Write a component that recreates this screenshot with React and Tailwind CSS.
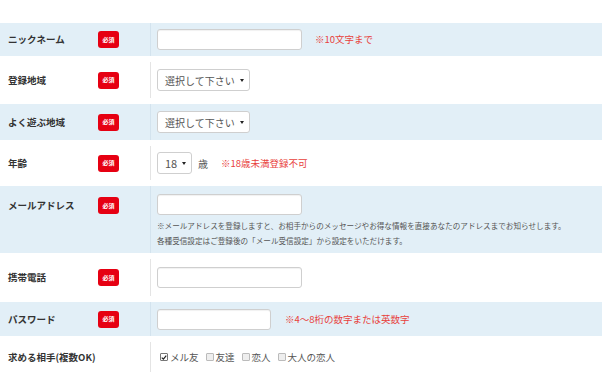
import React from 'react'

const font = { fontFamily: '"Noto Sans CJK JP", "Noto Sans", sans-serif' }

function Badge() {
  return (
    <span className="flex items-center justify-center w-[21px] h-[17px] rounded-[3px] bg-[#e60012] text-white text-[6px] font-bold leading-none">
      必須
    </span>
  )
}

function Row({ label, blue, h, top, children, required = true }) {
  return (
    <div className={`flex ${h} ${top ? 'items-start' : 'items-center'} ${blue ? 'bg-[#e2eff7]' : 'bg-white'}`}>
      <div className={`flex w-[150px] shrink-0 items-center pl-2 ${top ? 'pt-[11px]' : ''}`}>
        <span className="w-[90px] whitespace-nowrap text-[9.5px] font-bold text-[#333]">{label}</span>
        {required && <Badge />}
      </div>
      <div className={`self-stretch flex border-l ${blue ? 'border-[#d3e3ee]' : 'border-[#e4e4e4] my-[6px]'} pl-[6px] ${top ? 'items-start pt-[8px]' : 'items-center'}`}>
        {children}
      </div>
    </div>
  )
}

function TextBox({ w = 'w-[145px]' }) {
  return <div className={`${w} h-[21px] bg-white border border-[#cfcfcf] rounded-[3px] shadow-[inset_0_1px_1px_rgba(0,0,0,0.06)]`} />
}

function Select({ text, w, size = 'text-[10px]' }) {
  return (
    <div className={`${w} h-[22px] flex items-center justify-between whitespace-nowrap bg-white border border-[#cfcfcf] rounded-[3px] pl-[7px] pr-[5px] ${size} text-[#555]`}>
      <span>{text}</span>
      <svg width="4" height="3" viewBox="0 0 4 3">
        <path d="M0 0 H4 L2 3 Z" fill="#222" />
      </svg>
    </div>
  )
}

function Note({ children, className = '' }) {
  return <span className={`whitespace-nowrap text-[9.5px] text-[#e8413b] ${className}`}>{children}</span>
}

function Check({ checked, label }) {
  return (
    <span className="flex items-center mr-[7px]">
      <span className={`w-[8px] h-[8px] border ${checked ? 'border-[#777] bg-white' : 'border-[#bbb] bg-[#eee]'} rounded-[1px] flex items-center justify-center mr-[2px]`}>
        {checked && (
          <svg width="7" height="7" viewBox="0 0 8 8">
            <path d="M1 4.2 L3.2 6.2 L7 1.5" stroke="#222" strokeWidth="1.6" fill="none" />
          </svg>
        )}
      </span>
      <span className="text-[9.5px] text-[#555]">{label}</span>
    </span>
  )
}

export default function App() {
  return (
    <div className="w-[602px] h-[392px] bg-white overflow-hidden" style={font}>
      <div className="h-[23px]" />
      <Row label="ニックネーム" blue h="h-[33px]">
        <TextBox />
        <Note className="ml-[13px]">※10文字まで</Note>
      </Row>
      <Row label="登録地域" h="h-[48px]">
        <Select text="選択して下さい" w="w-[93px]" />
      </Row>
      <Row label="よく遊ぶ地域" blue h="h-[36px]">
        <Select text="選択して下さい" w="w-[93px]" />
      </Row>
      <Row label="年齢" h="h-[46px]">
        <Select text="18" w="w-[35px]" size="text-[11px]" />
        <span className="ml-[6px] text-[10px] text-[#555]">歳</span>
        <Note className="ml-[13px]">※18歳未満登録不可</Note>
      </Row>
      <Row label="メールアドレス" blue top h="h-[67px]">
        <div className="flex flex-col">
          <TextBox />
          <p className="mt-[3px] whitespace-nowrap text-[7.6px] leading-[15px] text-[#555]">
            ※メールアドレスを登録しますと、お相手からのメッセージやお得な情報を直接あなたのアドレスまでお知らせします。
            <br />
            各種受信設定はご登録後の「メール受信設定」から設定をいただけます。
          </p>
        </div>
      </Row>
      <Row label="携帯電話" h="h-[49px]">
        <TextBox />
      </Row>
      <Row label="パスワード" blue h="h-[34px]">
        <TextBox w="w-[114px]" />
        <Note className="ml-[14px]">※4〜8桁の数字または英数字</Note>
      </Row>
      <Row label="求める相手(複数OK)" required={false} h="h-[42px]">
        <div className="flex items-center pl-[3px]">
          <Check checked label="メル友" />
          <Check label="友達" />
          <Check label="恋人" />
          <Check label="大人の恋人" />
        </div>
      </Row>
    </div>
  )
}
